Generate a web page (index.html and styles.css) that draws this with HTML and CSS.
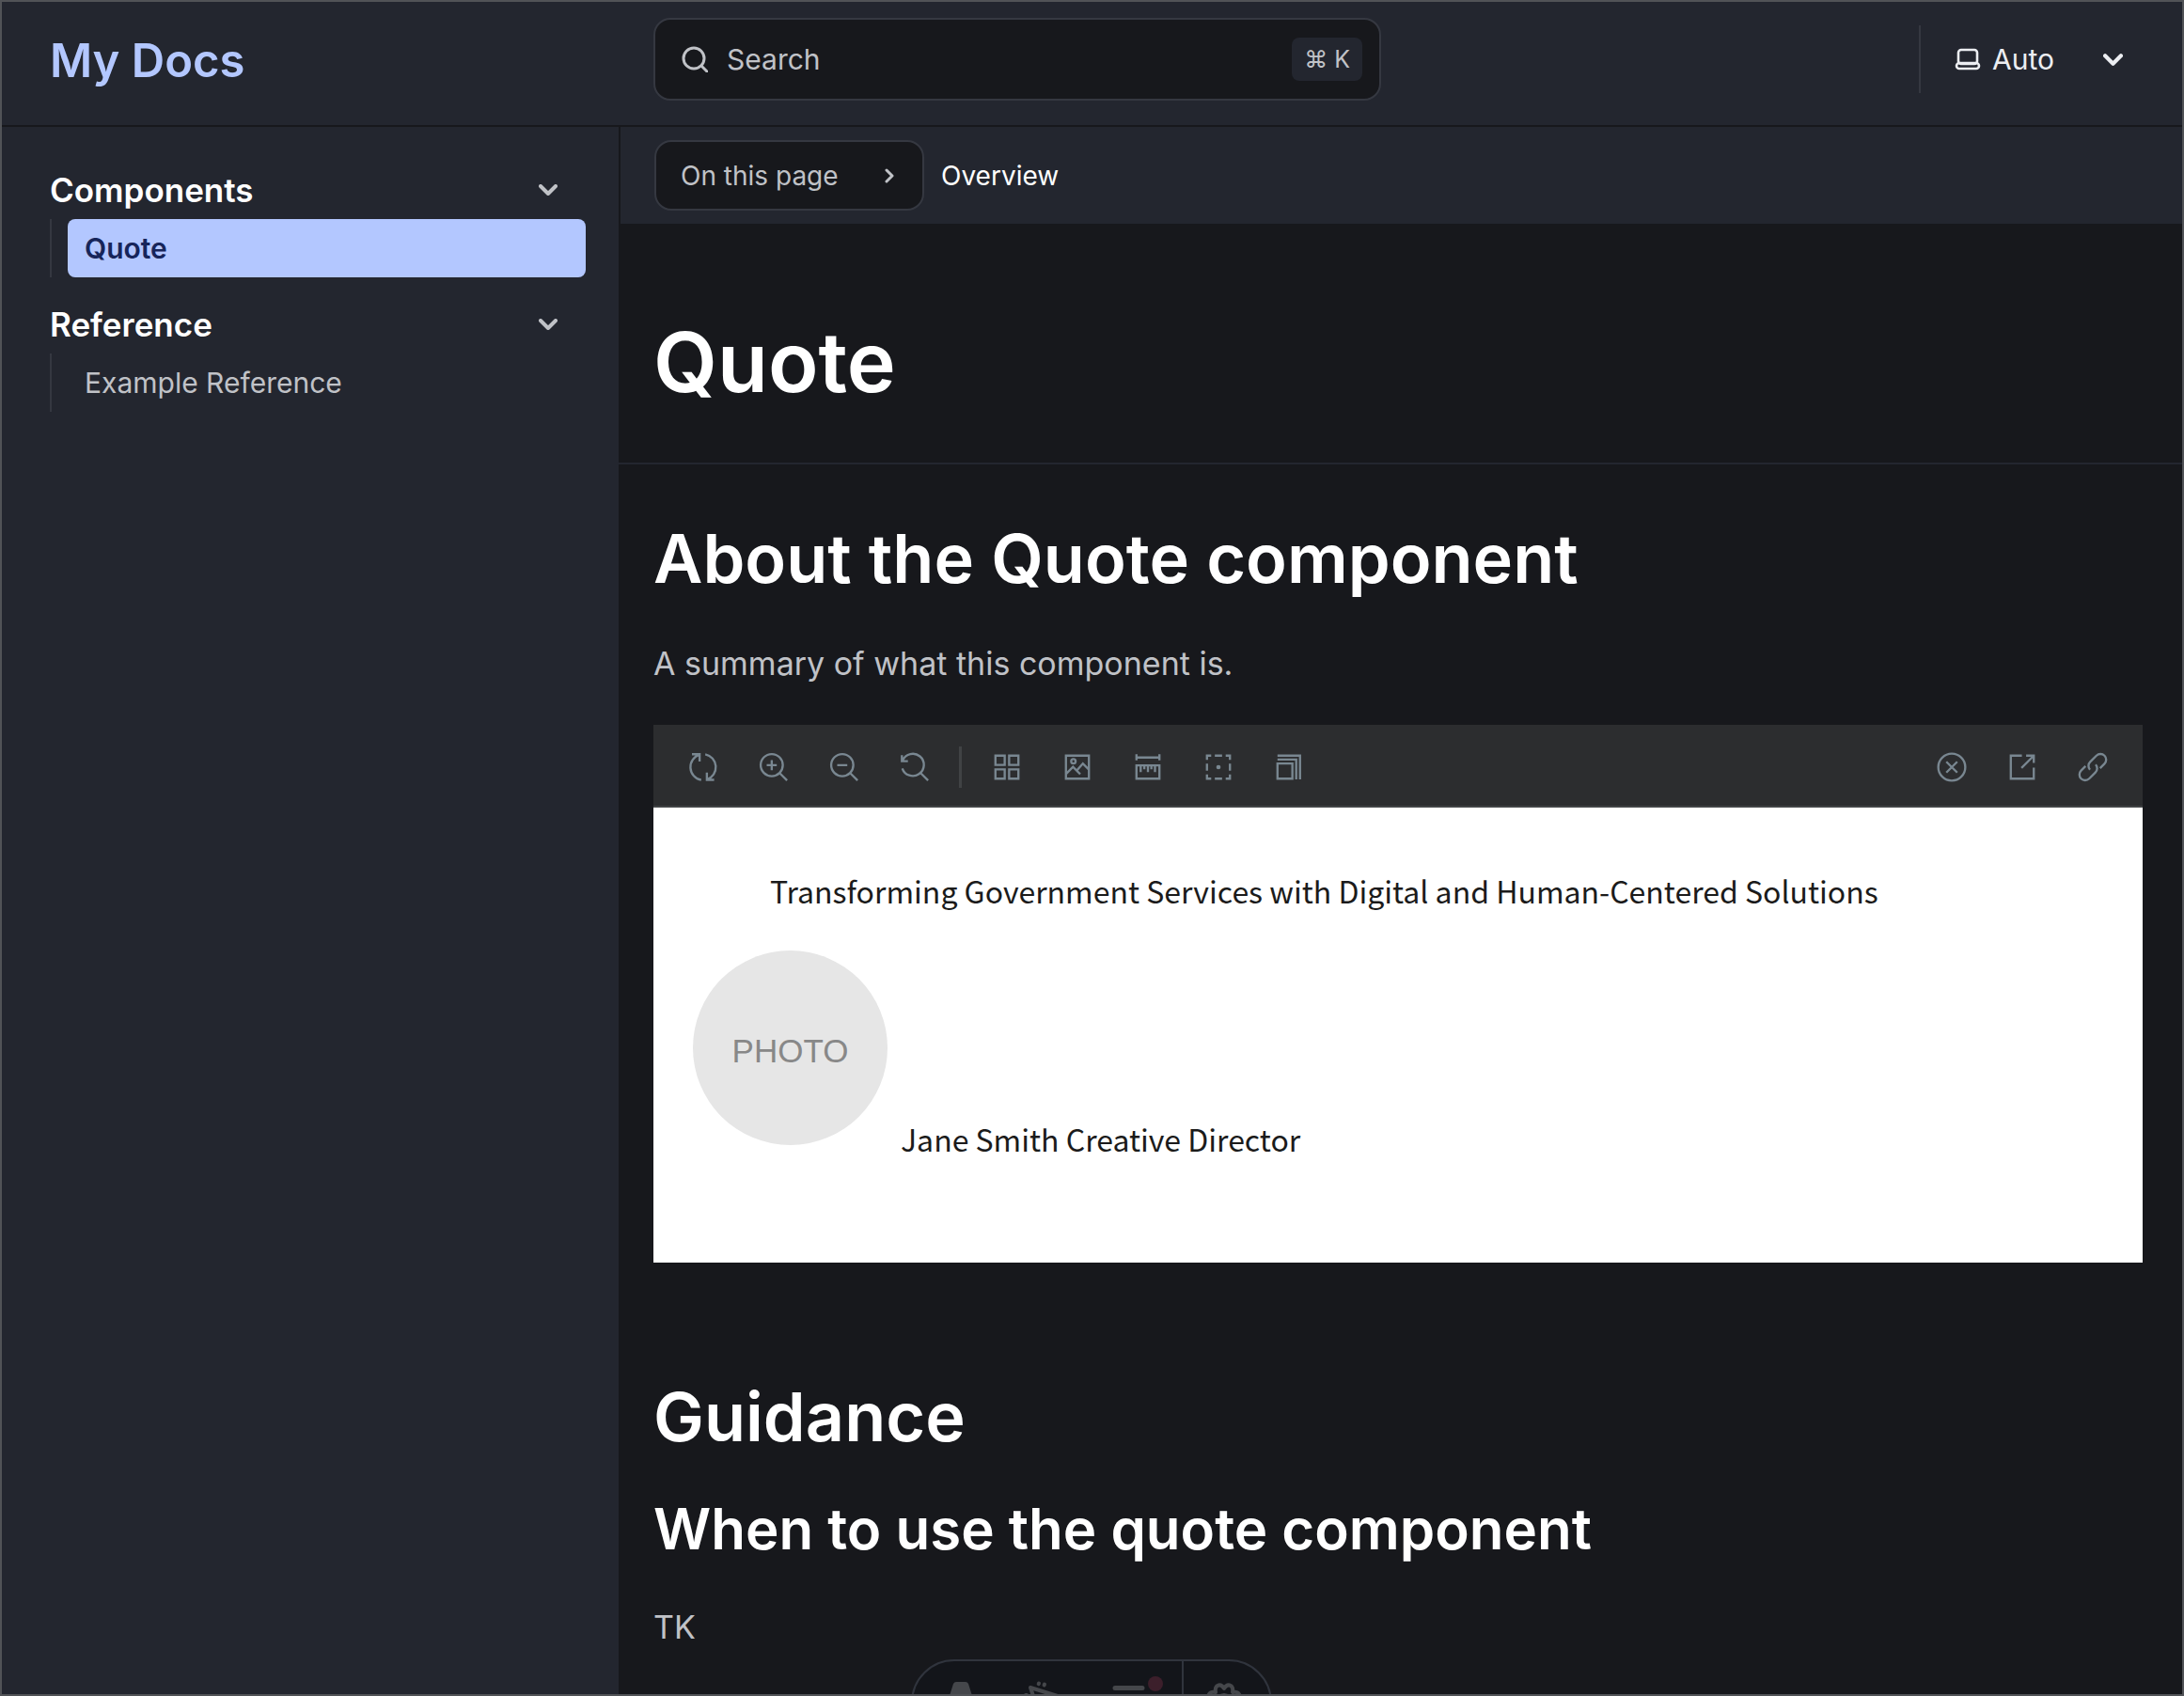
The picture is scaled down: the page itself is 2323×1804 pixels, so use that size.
FILE: index.html
```html
<!DOCTYPE html>
<html lang="en">
<head>
<meta charset="utf-8">
<meta name="viewport" content="width=device-width, initial-scale=1">
<title>Quote | My Docs</title>
<link rel="stylesheet" href="styles.css">
</head>
<body>
<header class="header">
  <a class="site-title" href="#">My Docs</a>
  <div class="header-main">
    <button class="search" type="button">
      <svg class="search-icon" viewBox="0 0 28 28" aria-hidden="true"><circle cx="13" cy="13" r="11"/><path d="M21 21l6 6"/></svg>
      <span class="search-label">Search</span>
      <kbd class="search-key">⌘ K</kbd>
    </button>
    <label class="theme">
      <svg class="theme-icon" viewBox="0 0 28 24" aria-hidden="true"><rect x="4" y="2" width="20" height="15" rx="3"/><rect x="2" y="16" width="24" height="6" rx="3"/></svg>
      <select class="theme-select" aria-label="Select theme"><option>Auto</option><option>Dark</option><option>Light</option></select>
      <svg class="theme-caret" viewBox="0 0 20 12" aria-hidden="true"><path d="M2 2l8 8 8-8"/></svg>
    </label>
  </div>
</header>
<div class="layout">
  <nav class="sidebar" aria-label="Main">
    <details class="group" open>
      <summary class="group-title">Components<svg class="caret" viewBox="0 0 20 12" aria-hidden="true"><path d="M2 2l8 8 8-8"/></svg></summary>
      <ul class="group-list"><li><a class="group-link current" href="#" aria-current="page">Quote</a></li></ul>
    </details>
    <details class="group" open>
      <summary class="group-title">Reference<svg class="caret" viewBox="0 0 20 12" aria-hidden="true"><path d="M2 2l8 8 8-8"/></svg></summary>
      <ul class="group-list"><li><a class="group-link" href="#">Example Reference</a></li></ul>
    </details>
  </nav>
  <div class="content">
    <nav class="toc" aria-label="On this page">
      <button class="toc-button" type="button">On this page<svg class="toc-caret" viewBox="0 0 12 16" aria-hidden="true"><path d="M3 2l6 6-6 6"/></svg></button>
      <span class="toc-current">Overview</span>
    </nav>
    <main>
      <div class="hero"><h1>Quote</h1></div>
      <div class="prose">
        <h2>About the Quote component</h2>
        <p class="text">A summary of what this component is.</p>
        <section class="story" aria-label="Quote preview">
          <div class="story-bar">
            <button class="tool" type="button" aria-label="Remount component"><svg viewBox="0 0 14 14"><path d="M6 13.4A6.5 6.5 0 0 1 5.2.8M8 .6a6.5 6.5 0 0 1 .9 12.5M1.4.6h3.8v3.6M12.4 13.3H8.8V9.7"/></svg></button>
            <button class="tool" type="button" aria-label="Zoom in"><svg viewBox="0 0 14 14"><circle cx="6" cy="6" r="5.5"/><path d="M9.9 9.9l3.7 3.7M6 3.5v5M3.5 6h5"/></svg></button>
            <button class="tool" type="button" aria-label="Zoom out"><svg viewBox="0 0 14 14"><circle cx="6" cy="6" r="5.5"/><path d="M9.9 9.9l3.7 3.7M3.5 6h5"/></svg></button>
            <button class="tool" type="button" aria-label="Reset zoom"><svg viewBox="0 0 14 14"><path d="M1 3.6A5.5 5.5 0 1 1 .8 7.6M.6 1v3h3M9.9 9.9l3.7 3.7"/></svg></button>
            <span class="tool-divider"></span>
            <button class="tool" type="button" aria-label="Backgrounds"><svg viewBox="0 0 14 14"><path d="M1.3 1.3h4.6v4.6H1.3zM8.1 1.3h4.6v4.6H8.1zM1.3 8.1h4.6v4.6H1.3zM8.1 8.1h4.6v4.6H8.1z"/></svg></button>
            <button class="tool" type="button" aria-label="Viewport"><svg viewBox="0 0 14 14"><path d="M1.3 1.3h11.4v11.4H1.3zM1.5 10.2l3.3-3.4 3.6 3.7M6.7 8.6l3-3.4 3 3"/><circle cx="5" cy="4.1" r="1.1"/></svg></button>
            <button class="tool" type="button" aria-label="Measure"><svg viewBox="0 0 14 14"><path d="M1.3.6v3M12.7.6v3M1.3 2.2h11.4M1.3 6.1h11.4v6.6H1.3zM3.4 6v3.5M5.2 6v2M7 6v3.5M8.7 6v2M10.5 6v3.5"/></svg></button>
            <button class="tool" type="button" aria-label="Outline"><svg viewBox="0 0 14 14"><path d="M1.3 3.4V1.3h2.1M5.2 1.3h3.6M10.6 1.3h2.1v2.1M12.7 5.2v3.6M12.7 10.6v2.1h-2.1M8.8 12.7H5.2M3.4 12.7H1.3v-2.1M1.3 8.8V5.2"/><circle class="dot" cx="7" cy="7" r="1.1"/></svg></button>
            <button class="tool" type="button" aria-label="Vision simulator"><svg viewBox="0 0 14 14"><path d="M1.3 5.2h7.4v7.5H1.3zM1.3 3.2h9.3v9.9M1.3 1.3h11.2v11.8"/></svg></button>
            <span class="tool-space"></span>
            <button class="tool" type="button" aria-label="Close"><svg viewBox="0 0 14 14"><circle cx="7" cy="7" r="6.7"/><path d="M4.3 4.3l5.4 5.4M9.7 4.3L4.3 9.7"/></svg></button>
            <button class="tool" type="button" aria-label="Open in new tab"><svg viewBox="0 0 14 14"><path d="M6.8 1.3H1.3v11.4h11.4V7.2M8.9 1.3h3.8v3.6M12.5 1.5L6.6 7.4"/></svg></button>
            <button class="tool" type="button" aria-label="Copy link"><svg viewBox="0 0 14 14"><path d="M5.6 8.3a2.8 2.8 0 0 1 .1-3.9L8.8 1.3a2.8 2.8 0 0 1 4 4L10.600 7.500M8.400 5.700a2.800 2.800 0 0 1-.1 3.900L5.200 12.700a2.800 2.800 0 0 1-4-4L3.400 6.500"/></svg></button>
          </div>
          <div class="story-canvas">
            <blockquote class="quote">Transforming Government Services with Digital and Human-Centered Solutions</blockquote>
            <div class="byline">
              <div class="photo">PHOTO</div>
              <div class="person">Jane Smith Creative Director</div>
            </div>
          </div>
        </section>
        <h2>Guidance</h2>
        <h3>When to use the quote component</h3>
        <p class="text">TK</p>
      </div>
    </main>
  </div>
</div>
<div class="devbar">
  <button class="dev" type="button" aria-label="Menu"><svg viewBox="0 0 40 40"><path class="solid" d="M15-2h10q2 0 3 2l12 38c-4-3-9-4-14-5l-4-17h-4l-4 17c-5 1-10 2-14 5L12 0q1-2 3-2z"/></svg></button>
  <button class="dev" type="button" aria-label="Inspect"><svg viewBox="0 0 40 40"><path d="M32 14L0 4l10 30 5-11z"/><path d="M9-.5l-.3.600M15 .5l-.4 1M-5 12h1M-4 19l1-.4"/></svg></button>
  <button class="dev" type="button" aria-label="Audit"><svg viewBox="0 0 52 40"><path class="thick" d="M2 4.500h29M2 18h18M2 31h14"/><circle cx="32" cy="23" r="9"/><circle class="alert" cx="45" cy="0" r="8"/></svg></button>
  <button class="dev" type="button" aria-label="Settings"><svg viewBox="0 0 40 40"><path d="M20 5q3-5 7-3 3 2 2 7 5-1 7 2 2 4-3 7 5 4 3 8-2 3-7 2 1 5-2 7-4 2-7-3-3 5-7 3-3-2-2-7-5 1-7-2-2-4 3-8-5-3-3-7 2-3 7-2-1-5 2-7 4-2 7 3z"/><circle cx="20" cy="19" r="7"/></svg></button>
</div>
</body>
</html>
```
FILE: styles.css
```css
:root {
  --bg: #17181c;
  --panel: #23262f;
  --line: #353841;
  --gray: #c0c2c7;
  --accent: #b3c7ff;
  --sidebar: 658px;
}

* { box-sizing: border-box; }

body {
  margin: 0;
  min-height: 100vh;
  display: flex;
  flex-direction: column;
  background: var(--bg);
  color: var(--gray);
  font-family: Inter, "Liberation Sans", sans-serif;
}

body::after {
  content: "";
  position: fixed;
  inset: 0;
  border: 2px solid #515357;
  pointer-events: none;
  z-index: 3;
}

button, select { font: inherit; color: inherit; cursor: pointer; }
a { color: inherit; text-decoration: none; }
h1, h2, h3, p, ul, blockquote { margin: 0; padding: 0; }
ul { list-style: none; }

svg {
  display: block;
  fill: none;
  stroke: currentColor;
  stroke-width: 3;
  stroke-linecap: round;
  stroke-linejoin: round;
}

.header {
  display: grid;
  grid-template-columns: var(--sidebar) 1fr;
  height: 135px;
  padding-bottom: 7px;
  align-items: center;
  background: var(--panel);
  border-bottom: 2px solid var(--bg);
}

.site-title {
  padding: 4px 0 0 53px;
  font-size: 49px;
  line-height: 60px;
  font-weight: 600;
  color: var(--accent);
}

.header-main {
  display: flex;
  justify-content: space-between;
  align-items: center;
  padding: 0 65px 0 37px;
}

.search {
  display: flex;
  align-items: center;
  gap: 20px;
  width: 774px;
  height: 88px;
  padding: 0 18px 0 28px;
  background: var(--bg);
  border: 2px solid var(--line);
  border-radius: 18px;
  font-size: 30px;
}

.search-icon { width: 28px; height: 28px; }
.search-label { flex: 1; text-align: left; }

.search-key {
  padding: 0 13px;
  border-radius: 8px;
  background: var(--panel);
  font-family: inherit;
  font-size: 25px;
  line-height: 46px;
}

.theme {
  display: flex;
  align-items: center;
  height: 72px;
  padding-left: 36px;
  border-left: 2px solid var(--line);
  color: #eceef2;
  font-size: 30px;
}

.theme-icon { width: 28px; height: 24px; margin-right: 12px; stroke-width: 2.6; }
.theme-select { width: 118px; padding: 0; border: 0; background: none; appearance: none; }
.theme-caret { width: 21px; height: 13px; stroke-width: 4; }

.layout {
  flex: 1;
  display: grid;
  grid-template-columns: var(--sidebar) minmax(0, 1fr);
}

.sidebar {
  padding: 36px 35px 0 53px;
  background: var(--panel);
}

.group + .group { margin-top: 19px; }

.group-title {
  display: flex;
  align-items: center;
  justify-content: space-between;
  height: 62px;
  padding-right: 30px;
  font-size: 35px;
  font-weight: 600;
  color: #fff;
  list-style: none;
}

.caret { width: 20px; height: 12px; color: var(--gray); stroke-width: 4; }

.group-list {
  padding-left: 17px;
  border-left: 2px solid var(--line);
}

.group-link {
  display: block;
  padding: 0 18px;
  border-radius: 8px;
  font-size: 30px;
  line-height: 62px;
}

.current { background: var(--accent); color: #17255a; font-weight: 600; }

.toc {
  display: flex;
  align-items: center;
  gap: 18px;
  height: 103px;
  padding: 0 36px;
  background: var(--panel);
  border-left: 2px solid var(--bg);
  font-size: 28px;
}

.toc-button {
  display: flex;
  align-items: center;
  justify-content: space-between;
  width: 287px;
  height: 75px;
  padding: 0 29px 0 26px;
  background: var(--bg);
  border: 2px solid var(--line);
  border-radius: 18px;
}

.toc-caret { width: 12px; height: 16px; }
.toc-current { color: #fff; }

.hero {
  padding: 92px 37px 52px;
  border-bottom: 2px solid var(--panel);
}

h1, h2, h3 { font-weight: 600; color: #fff; }
h1 { font-size: 88px; line-height: 110px; }
h2 { font-size: 72px; line-height: 90px; }
h3 { margin-top: 36px; font-size: 60px; line-height: 76px; }

.prose { padding: 55px 44px 41px 37px; }
.text { margin-top: 36px; font-size: 34px; line-height: 62px; }

.story { margin: 34px 0 119px; }

.story-bar {
  display: flex;
  align-items: center;
  height: 88px;
  padding: 3px 16px 0 15px;
  background: #2c2d2f;
  border-bottom: 2px solid #414345;
}

.tool {
  display: grid;
  place-items: center;
  width: 75px;
  height: 60px;
  padding: 0;
  border: 0;
  background: none;
  color: #798791;
}

.tool svg {
  width: 30px;
  height: 30px;
  overflow: visible;
  stroke-width: 1.1;
  stroke-linecap: butt;
  stroke-linejoin: miter;
}

.tool .dot { fill: currentColor; stroke: none; }

.tool-divider { width: 3px; height: 44px; margin: 0 10px; background: #414345; }
.tool-space { flex: 1; }

.story-canvas {
  padding: 64px 42px 106px;
  background: #fff;
  color: #1b1b1b;
  font-family: "Noto Sans CJK JP", "Noto Sans", sans-serif;
  font-size: 32px;
  line-height: 48px;
}

.quote { padding-left: 82px; }
.byline { display: flex; align-items: flex-end; gap: 14px; margin-top: 40px; }
.person { margin-bottom: 2px; }

.photo {
  width: 207px;
  height: 207px;
  margin-bottom: 19px;
  border-radius: 50%;
  background: #e6e6e6;
  color: #888;
  font-family: "Liberation Sans", sans-serif;
  font-size: 35px;
  line-height: 214px;
  text-align: center;
}

.devbar {
  position: fixed;
  left: 50%;
  bottom: -53px;
  z-index: 2;
  display: flex;
  width: 384px;
  height: 92px;
  margin-left: -193px;
  padding-left: 4px;
  border: 2px solid #30343d;
  border-radius: 46px;
  background: #13151a;
  overflow: hidden;
}

.dev {
  flex: 1;
  display: grid;
  place-items: center;
  padding: 0;
  border: 0;
  background: none;
  color: #45474b;
}

.dev:last-child { flex: 0 0 94px; padding-right: 6px; border-left: 2px solid #30343d; }
.dev svg { height: 40px; overflow: visible; stroke-width: 4; }
.dev .thick { stroke-width: 5; }
.dev .solid { fill: currentColor; stroke: none; }
.dev .alert { fill: #3c1f2b; stroke: none; }
```
